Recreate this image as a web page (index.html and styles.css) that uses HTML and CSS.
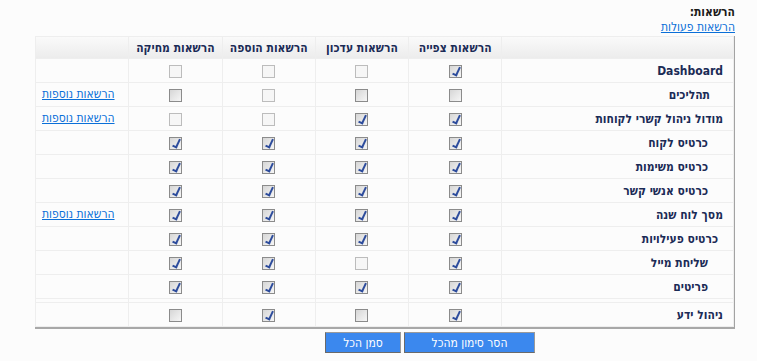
FILE: index.html
```html
<!DOCTYPE html>
<html dir="rtl" lang="he">
<head>
    <meta charset="utf-8" />
    <title>הרשאות</title>
    <link rel="stylesheet" href="styles.css">
</head>
<body>
    <div class="page">
        <div class="title">הרשאות:</div>
        <a href="#" class="lnk">הרשאות פעולות</a>
        <table class="perm">
            <tr class="head">
                <th class="c-name"></th>
                <th>הרשאות צפייה</th>
                <th>הרשאות עדכון</th>
                <th>הרשאות הוספה</th>
                <th>הרשאות מחיקה</th>
                <th class="c-more"></th>
            </tr>
            <tr>
                <td class="c-name n1">Dashboard</td>
                <td><span class="cb on"></span></td>
                <td><span class="cb off"></span></td>
                <td><span class="cb off"></span></td>
                <td><span class="cb off"></span></td>
                <td></td>
            </tr>
            <tr>
                <td class="c-name n3">תהליכים</td>
                <td><span class="cb"></span></td>
                <td><span class="cb"></span></td>
                <td><span class="cb off"></span></td>
                <td><span class="cb"></span></td>
                <td class="c-more"><a href="#" class="lnk">הרשאות נוספות</a></td>
            </tr>
            <tr>
                <td class="c-name n1">מודול ניהול קשרי לקוחות</td>
                <td><span class="cb on"></span></td>
                <td><span class="cb on"></span></td>
                <td><span class="cb off"></span></td>
                <td><span class="cb off"></span></td>
                <td class="c-more"><a href="#" class="lnk">הרשאות נוספות</a></td>
            </tr>
            <tr>
                <td class="c-name n2">כרטיס לקוח</td>
                <td><span class="cb on"></span></td>
                <td><span class="cb on"></span></td>
                <td><span class="cb on"></span></td>
                <td><span class="cb on"></span></td>
                <td></td>
            </tr>
            <tr>
                <td class="c-name n2">כרטיס משימות</td>
                <td><span class="cb on"></span></td>
                <td><span class="cb on"></span></td>
                <td><span class="cb on"></span></td>
                <td><span class="cb on"></span></td>
                <td></td>
            </tr>
            <tr>
                <td class="c-name n2">כרטיס אנשי קשר</td>
                <td><span class="cb on"></span></td>
                <td><span class="cb on"></span></td>
                <td><span class="cb on"></span></td>
                <td><span class="cb on"></span></td>
                <td></td>
            </tr>
            <tr>
                <td class="c-name n1">מסך לוח שנה</td>
                <td><span class="cb on"></span></td>
                <td><span class="cb on"></span></td>
                <td><span class="cb on"></span></td>
                <td><span class="cb on"></span></td>
                <td class="c-more"><a href="#" class="lnk">הרשאות נוספות</a></td>
            </tr>
            <tr>
                <td class="c-name n4">כרטיס פעילויות</td>
                <td><span class="cb on"></span></td>
                <td><span class="cb on"></span></td>
                <td><span class="cb on"></span></td>
                <td><span class="cb on"></span></td>
                <td></td>
            </tr>
            <tr>
                <td class="c-name n2">שליחת מייל</td>
                <td><span class="cb on"></span></td>
                <td><span class="cb off"></span></td>
                <td><span class="cb on"></span></td>
                <td><span class="cb on"></span></td>
                <td></td>
            </tr>
            <tr>
                <td class="c-name n2">פריטים</td>
                <td><span class="cb on"></span></td>
                <td><span class="cb on"></span></td>
                <td><span class="cb on"></span></td>
                <td><span class="cb on"></span></td>
                <td></td>
            </tr>
            <tr class="spacer">
                <td></td><td></td><td></td><td></td><td></td><td></td>
            </tr>
            <tr>
                <td class="c-name n1">ניהול ידע</td>
                <td><span class="cb on"></span></td>
                <td><span class="cb"></span></td>
                <td><span class="cb on"></span></td>
                <td><span class="cb"></span></td>
                <td></td>
            </tr>
        </table>
        <div class="buttons">
            <button class="btn btn-wide">הסר סימון מהכל</button>
            <button class="btn btn-small">סמן הכל</button>
        </div>
    </div>
</body>
</html>
```

FILE: styles.css
```css
body {
    margin: 0;
    background-color: #fcfcfc;
    font-family: 'DejaVu Sans Condensed', 'DejaVu Sans', sans-serif;
    font-size: 12px;
    color: #1b2b56;
}
.page {
    padding: 5px 22px 0 22px;
}
.title {
    font-weight: bold;
    color: #1a1a1a;
    line-height: 15px;
}
a.lnk {
    color: #0a6fd8;
    text-decoration: underline;
    line-height: 15px;
    display: inline-block;
}
table.perm {
    border-collapse: separate;
    border-spacing: 1px;
    background-color: #eeeeee;
    border-right: 1px solid #a3a3a3;
    border-bottom: 2px solid #a8a8a8;
    margin-top: 1px;
    width: 700px;
}
table.perm th {
    height: 21px;
    padding: 0;
    font-weight: bold;
    color: #1b2b56;
    background: linear-gradient(#fafafa, #ececec);
    width: 92px;
}
table.perm th.c-name {
    width: 230px;
}
table.perm td {
    height: 23px;
    padding: 0;
    text-align: center;
    background-color: #fcfcfc;
}
table.perm tr.spacer td {
    height: 3px;
}
table.perm td.c-name {
    text-align: right;
    font-weight: bold;
    color: #1b2b56;
}
table.perm td.n1 { padding-right: 10px; }
table.perm td.n2 { padding-right: 25px; }
table.perm td.n3 { padding-right: 23px; }
table.perm td.n4 { padding-right: 15px; }
table.perm td.c-more {
    text-align: left;
    padding-left: 6px;
}
.cb {
    display: inline-block;
    position: relative;
    width: 11px;
    height: 11px;
    border: 1px solid #8b8b8b;
    background: linear-gradient(135deg, #d6d6d6, #f6f6f6);
    vertical-align: middle;
}
.cb.off {
    border-color: #bcbcbc;
    background: #f6f6f6;
}
.cb.on::after {
    content: "";
    position: absolute;
    left: 4px;
    top: 0px;
    width: 3px;
    height: 8px;
    border: solid #2d4c9c;
    border-width: 0 2px 2px 0;
    transform: rotate(25deg);
}
.buttons {
    display: flex;
    gap: 3px;
    padding-right: 200px;
    margin-top: 3px;
}
.btn {
    height: 21px;
    background-color: #3b88ee;
    color: #fff;
    font-family: 'DejaVu Sans Condensed', 'DejaVu Sans', sans-serif;
    font-size: 12px;
    border: 1px solid #6a6a6a;
    border-top-color: #9a9a9a;
    border-right-color: #9a9a9a;
    padding: 0;
}
.btn-wide { width: 131px; }
.btn-small { width: 76px; }
```
